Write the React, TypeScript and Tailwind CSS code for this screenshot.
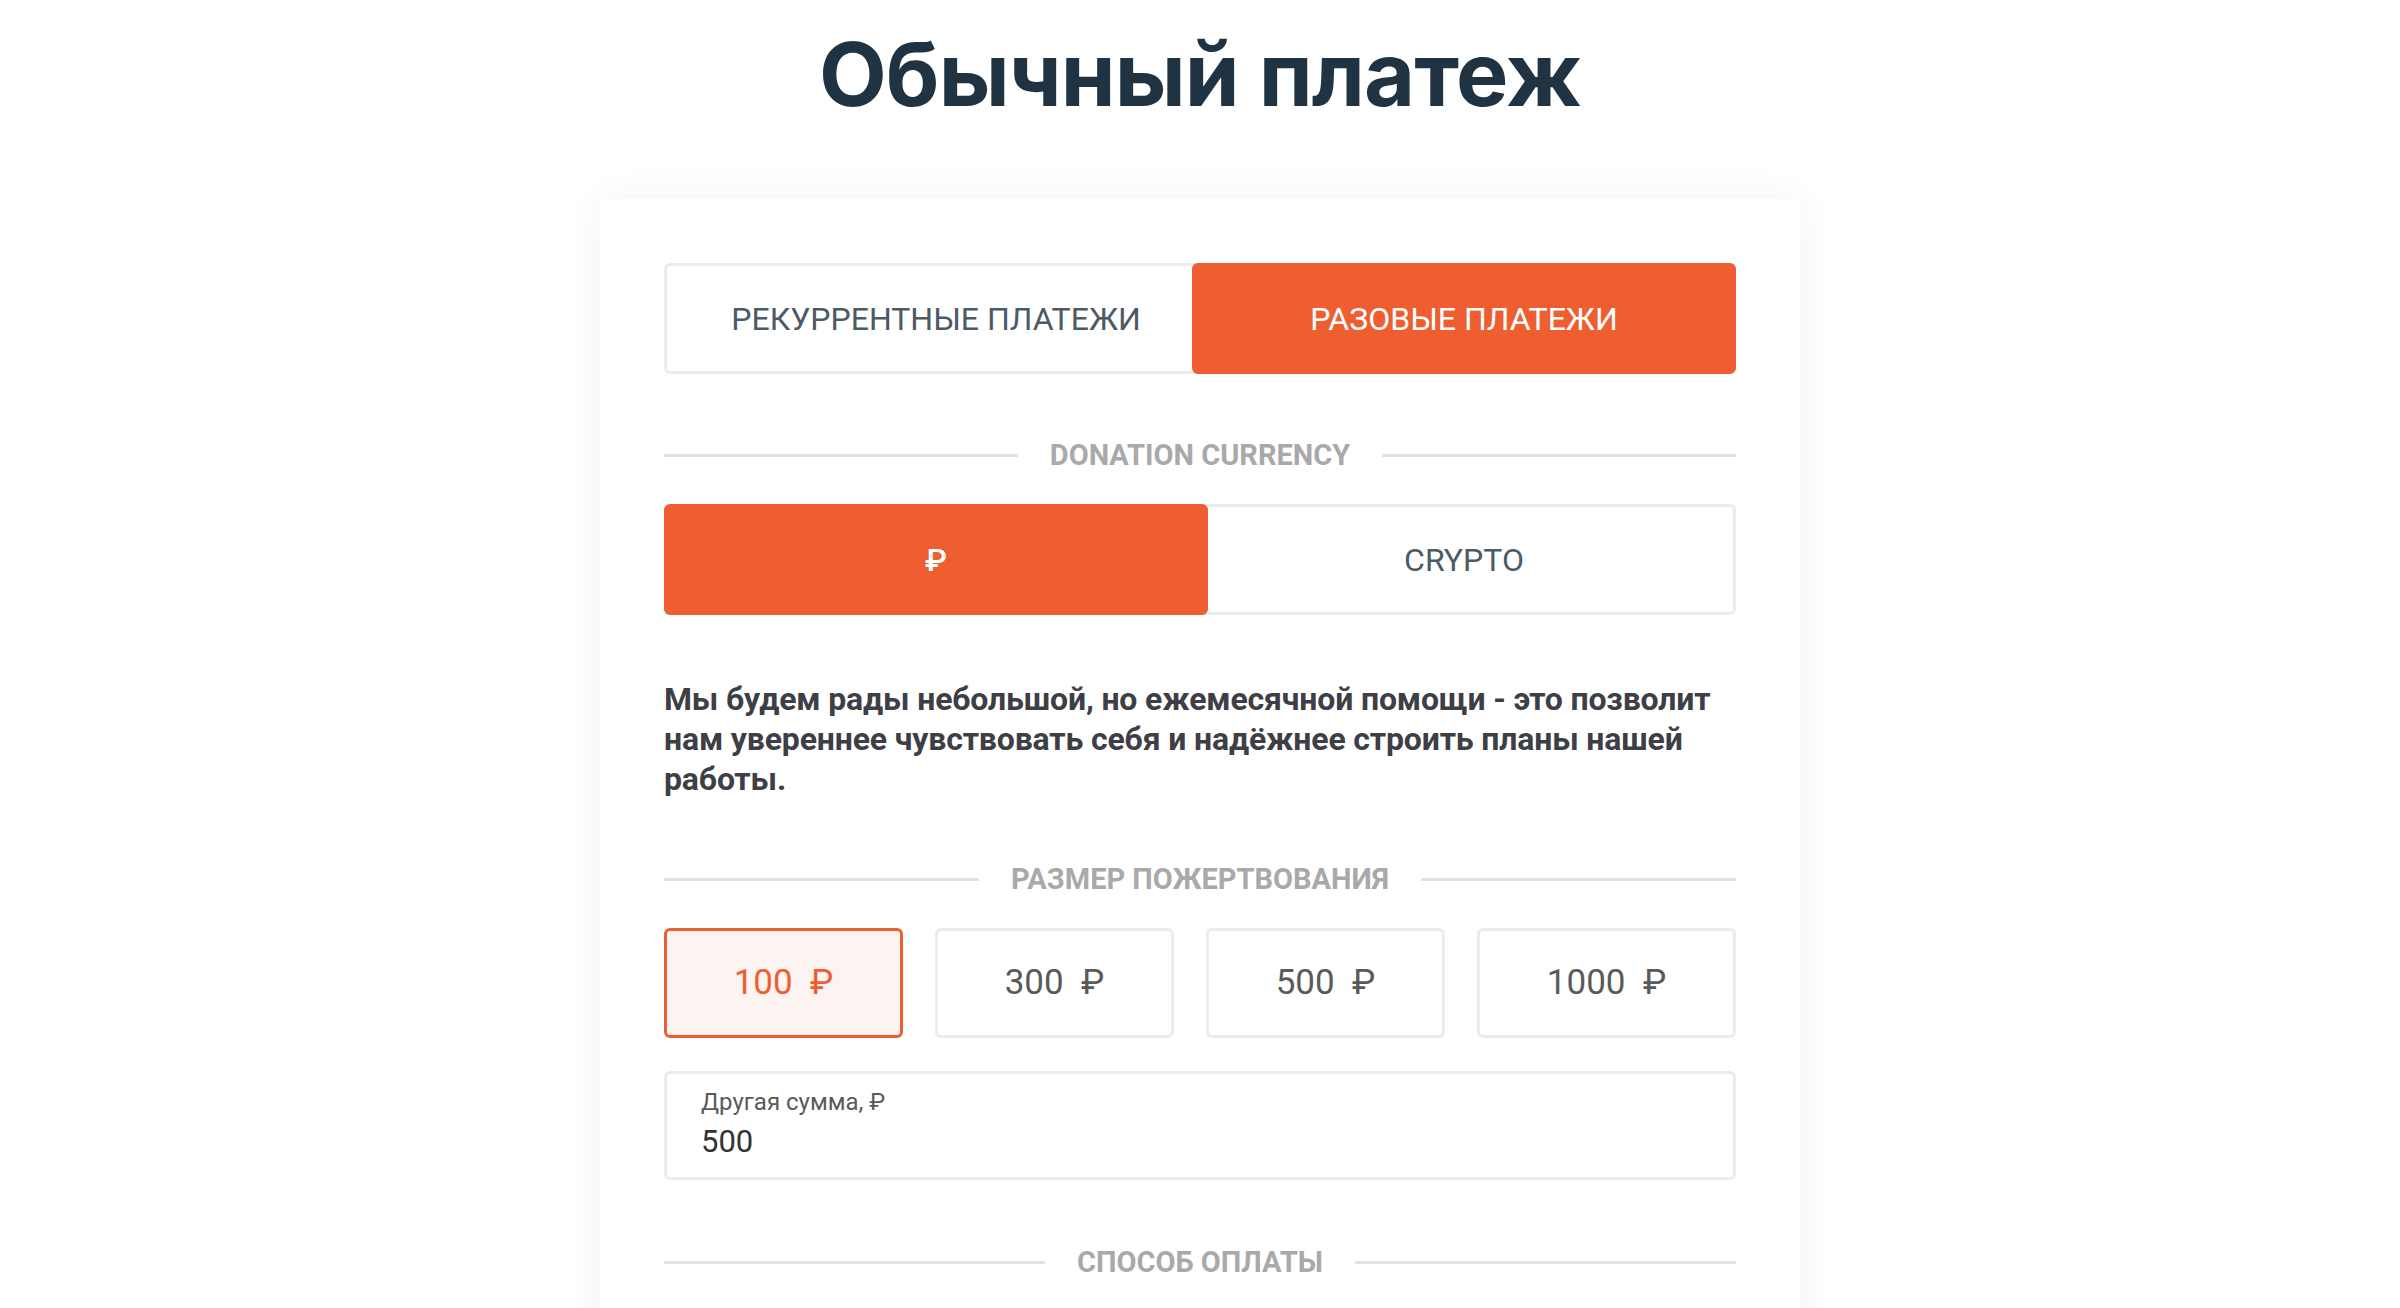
import { useState } from "react";

const amounts = [100, 300, 500, 1000];

function Divider({ label }: { label: string }) {
  return (
    <div className="flex items-center gap-8">
      <div className="h-[3px] flex-1 bg-[#e2e2e2]" />
      <span className="text-[29px] font-bold uppercase leading-none text-[#a9a9a9]">
        {label}
      </span>
      <div className="h-[3px] flex-1 bg-[#e2e2e2]" />
    </div>
  );
}

function Toggle({
  options,
  active,
  onChange,
  medium,
}: {
  options: string[];
  active: number;
  onChange: (i: number) => void;
  medium?: boolean;
}) {
  return (
    <div className="flex h-[111px]">
      {options.map((label, i) => (
        <button
          key={label}
          onClick={() => onChange(i)}
          className={
            "w-[544px] shrink-0 rounded-md text-[32px] uppercase " +
            (i === 1 ? "-ml-4 " : "") +
            (active === i
              ? "relative z-10 bg-[#ef5e30] text-white " + (medium ? "font-medium" : "")
              : "border-[3px] border-[#ececec] bg-white text-[#4c5a66]")
          }
        >
          {label}
        </button>
      ))}
    </div>
  );
}

export default function App() {
  const [tab, setTab] = useState(1);
  const [currency, setCurrency] = useState(0);
  const [amount, setAmount] = useState(100);

  return (
    <div className="min-h-screen bg-white font-['Roboto',sans-serif]">
      <h1 className="pt-[22px] text-center font-['Inter',sans-serif] text-[88px] font-bold leading-[104px] tracking-[-0.01em] text-[#1f3343]">
        Обычный платеж
      </h1>

      <div className="mx-auto mt-[73px] w-[1200px] rounded-lg bg-white px-16 pb-16 pt-16 shadow-[0_0_40px_rgba(0,0,0,0.05)]">
        {/* payment type */}
        <Toggle
          options={["Рекуррентные платежи", "Разовые платежи"]}
          active={tab}
          onChange={setTab}
        />

        <div className="mt-[67px]">
          <Divider label="Donation currency" />
        </div>

        {/* currency */}
        <div className="mt-[34px]">
          <Toggle options={["₽", "Crypto"]} active={currency} onChange={setCurrency} medium />
        </div>

        <p className="mt-[64px] text-[32px] font-bold leading-[40px] tracking-[-0.005em] text-[#3e3f46]">
          Мы будем рады небольшой, но ежемесячной помощи - это позволит нам увереннее
          чувствовать себя и надёжнее строить планы нашей работы.
        </p>

        <div className="mt-[66px]">
          <Divider label="Размер пожертвования" />
        </div>

        {/* amounts */}
        <div className="mt-[34px] flex h-[110px] gap-8">
          {amounts.map((a, i) => (
            <button
              key={a}
              onClick={() => setAmount(a)}
              className={
                "rounded-md border-[3px] text-[35px] " +
                (i === 3 ? "flex-1 " : "w-[239px] ") +
                (amount === a
                  ? "border-[#ef5e30] bg-[#fdf4f1] text-[#ef5e30]"
                  : "border-[#ececec] bg-white text-[#5a5a5a]")
              }
            >
              {a}&nbsp;&nbsp;₽
            </button>
          ))}
        </div>

        {/* custom amount */}
        <div className="mt-[33px] flex h-[109px] flex-col rounded-md border-[3px] border-[#ececec] px-[34px] pt-[12px]">
          <span className="text-[24px] leading-[32px] text-[#5a5a5a]">Другая сумма, ₽</span>
          <span className="mt-[4px] text-[31px] leading-[40px] text-[#333333]">500</span>
        </div>

        <div className="mt-[68px]">
          <Divider label="Способ оплаты" />
        </div>
        <div className="h-[120px]" />
      </div>
    </div>
  );
}
